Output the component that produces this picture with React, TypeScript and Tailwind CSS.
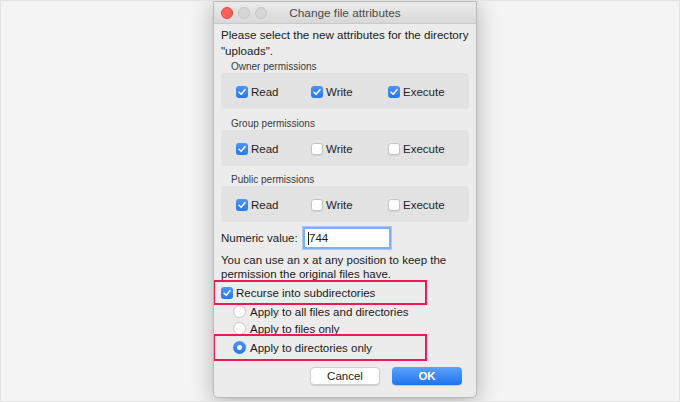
import React from "react";

const font = { fontFamily: '"Liberation Sans", Arial, sans-serif' };

function Check({ on }: { on: boolean }) {
  if (on) {
    return (
      <span className="flex h-[12px] w-[12px] shrink-0 items-center justify-center rounded-[3px] bg-gradient-to-b from-[#4b95f7] to-[#2a76ee]">
        <svg viewBox="0 0 12 12" className="h-[10px] w-[10px]">
          <path d="M2.4 6.3 L5 8.8 L9.6 3.2" fill="none" stroke="#fff" strokeWidth="1.8" strokeLinecap="round" strokeLinejoin="round" />
        </svg>
      </span>
    );
  }
  return <span className="h-[12px] w-[12px] shrink-0 rounded-[3px] border border-[#c4c4c4] bg-white shadow-[0_1px_0_rgba(0,0,0,0.06)]" />;
}

function Radio({ on }: { on: boolean }) {
  if (on) {
    return (
      <span className="flex h-[13px] w-[13px] shrink-0 items-center justify-center rounded-full bg-gradient-to-b from-[#4b95f7] to-[#2a76ee]">
        <span className="h-[5px] w-[5px] rounded-full bg-white" />
      </span>
    );
  }
  return <span className="h-[13px] w-[13px] shrink-0 rounded-full border border-[#c8c8c8] bg-white" />;
}

function PermGroup({ label, values }: { label: string; values: boolean[] }) {
  const names = ["Read", "Write", "Execute"];
  return (
    <div>
      <div className="h-[12px] pl-[10px] text-[10px] leading-[12px] text-[#3a3a3a]">{label}</div>
      <div className="flex h-[36px] items-start rounded-[4px] bg-[#e2e2e2] pl-[15px] pt-[12px]">
        {names.map((n, i) => (
          <div key={n} className={`flex h-[14px] items-center gap-[3px] ${i === 0 ? "w-[75px]" : "w-[77px]"}`}>
            <Check on={values[i]} />
            <span className="text-[11.5px] leading-[14px] text-[#1f1f1f]">{n}</span>
          </div>
        ))}
      </div>
    </div>
  );
}

export default function App() {
  return (
    <div className="h-[402px] w-[680px] overflow-hidden border border-[#e2e2e2] bg-[#f4f4f4]" style={font}>
      <div className="flex h-full pl-[212px]">
        <div className="flex h-[397px] w-[264px] flex-col overflow-hidden rounded-b-[5px] border border-[#b9b9b9] bg-[#ececec] shadow-[0_4px_22px_rgba(0,0,0,0.28)]">
          {/* Title bar */}
          <div className="grid h-[22px] shrink-0 grid-cols-[1fr_auto_1fr] items-center border-b border-[#c9c9c9] bg-gradient-to-b from-[#ebebeb] to-[#d8d8d8]">
            <div className="flex items-center gap-[5px] pl-[7px]">
              <span className="h-[12px] w-[12px] rounded-full border border-[#e2463f] bg-[#fc605c]" />
              <span className="h-[12px] w-[12px] rounded-full border border-[#c6c6c6] bg-[#d6d6d6]" />
              <span className="h-[12px] w-[12px] rounded-full border border-[#c6c6c6] bg-[#d6d6d6]" />
            </div>
            <div className="text-[11.8px] leading-[14px] text-[#4a4a4a]">Change file attributes</div>
            <div />
          </div>

          <div className="flex flex-col px-[7px] pt-[3px] text-[#1a1a1a]">
            <p className="text-[11.6px] leading-[16px]">
              Please select the new attributes for the directory
              <br />
              "uploads".
            </p>

            <div className="mt-[2px]">
              <PermGroup label="Owner permissions" values={[true, true, true]} />
            </div>
            <div className="mt-[9px]">
              <PermGroup label="Group permissions" values={[true, false, false]} />
            </div>
            <div className="mt-[8px]">
              <PermGroup label="Public permissions" values={[true, false, false]} />
            </div>

            <div className="mt-[5px] flex h-[22px] items-center">
              <span className="w-[82px] text-[11.5px] leading-[14px]">Numeric value:</span>
              <div className="flex h-[22px] w-[88px] items-center border-2 border-[#7fb0f2] bg-white pl-[3px] shadow-[0_0_0_1px_#a9c8f3]">
                <span className="h-[13px] w-px bg-[#222]" />
                <span className="text-[11.5px] leading-[14px]">744</span>
              </div>
            </div>

            <p className="mt-[4px] text-[11.5px] leading-[14px]">
              You can use an x at any position to keep the
              <br />
              permission the original files have.
            </p>

            <div className="-ml-[8px] -mt-[1px] flex h-[25px] w-[214px] items-center gap-[3px] border-2 border-[#ee1852] pl-[6px]">
              <Check on={true} />
              <span className="text-[11.5px] leading-[14px]">Recurse into subdirectories</span>
            </div>

            <div className="-mt-[2px] flex h-[17px] items-center gap-[4px] pl-[12px]">
              <Radio on={false} />
              <span className="text-[11.5px] leading-[14px]">Apply to all files and directories</span>
            </div>
            <div className="flex h-[17px] items-center gap-[4px] pl-[12px]">
              <Radio on={false} />
              <span className="text-[11.5px] leading-[14px]">Apply to files only</span>
            </div>

            <div className="-ml-[8px] -mt-[3px] flex h-[27px] w-[214px] items-center gap-[4px] border-2 border-[#ee1852] pl-[18px]">
              <Radio on={true} />
              <span className="text-[11.5px] leading-[14px]">Apply to directories only</span>
            </div>

            <div className="mt-[6px] flex justify-end gap-[12px] pr-[7px]">
              <button type="button" className="h-[18px] w-[70px] rounded-[4px] border border-[#cfcfcf] bg-white text-[11.5px] leading-[14px] text-[#222] shadow-[0_1px_1px_rgba(0,0,0,0.12)]">
                Cancel
              </button>
              <button type="button" className="h-[18px] w-[70px] rounded-[4px] bg-gradient-to-b from-[#5aa2f9] to-[#1f72ef] text-[11.5px] font-bold leading-[14px] text-white shadow-[0_1px_1px_rgba(0,0,0,0.15)]">
                OK
              </button>
            </div>
          </div>
        </div>
      </div>
    </div>
  );
}
